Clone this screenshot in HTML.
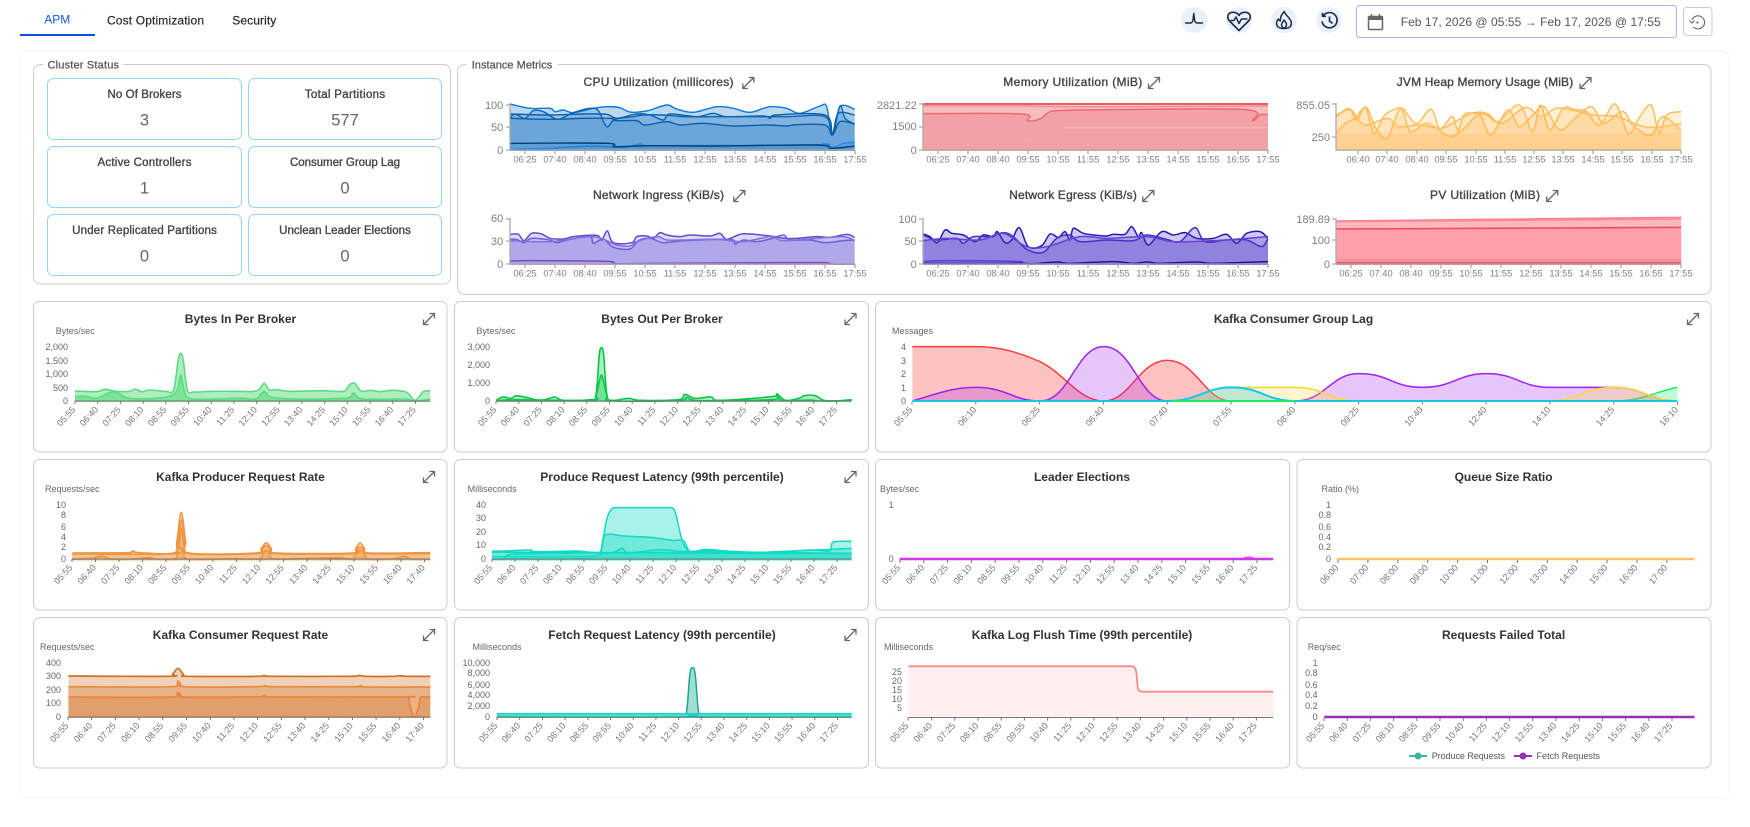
<!DOCTYPE html>
<html lang="en"><head><meta charset="utf-8"><title>APM</title>
<style>
html,body{margin:0;padding:0;background:#fff;width:1750px;height:827px;overflow:hidden}
.main{position:absolute;left:21px;top:52px;width:1707px;height:745px;background:#fff;border-radius:7px;box-shadow:0 0 6px rgba(0,0,0,.07)}
svg{position:absolute;left:0;top:0}
text{font-family:"Liberation Sans",sans-serif}
path{vector-effect:non-scaling-stroke;stroke-linejoin:round}
.card{fill:#fff;stroke:#ccc;stroke-width:1}
.stat{fill:#fff;stroke:#92d6f7;stroke-width:1}
.sl{font-size:11.5px;fill:#444;stroke:#444;stroke-width:.35;text-anchor:middle}
.sv{font-size:16.5px;fill:#666;text-anchor:middle}
.lg{font-size:11px;fill:#555;stroke:#555;stroke-width:.25}
.it{font-size:12px;fill:#444;stroke:#444;stroke-width:.35;text-anchor:middle}
.iy{font-size:11px;fill:#808080;text-anchor:end}
.ix{font-size:9.3px;fill:#808080;text-anchor:middle}
.ct{font-size:12px;font-weight:bold;fill:#333;text-anchor:middle}
.un{font-size:9px;fill:#666}
.cy{font-size:9px;fill:#666;text-anchor:end}
.cx text{font-size:9px;fill:#777;text-anchor:end}
.ex{fill:none;stroke:#666;stroke-width:1.3}
.ia{fill:none;stroke:#aaa;stroke-width:1.3}
.ca{fill:none;stroke:#777;stroke-width:1}
</style></head>
<body>
<div class="main"></div>
<svg width="1750" height="827" viewBox="0 0 1750 827" xmlns="http://www.w3.org/2000/svg">
<defs>
<clipPath id="c1"><rect x="180" y="130" width="1034" height="173"/></clipPath>
<clipPath id="c2"><rect x="180" y="480" width="1034" height="165"/></clipPath>
<clipPath id="c3"><rect x="130" y="130" width="1034" height="173"/></clipPath>
<clipPath id="c4"><rect x="130" y="480" width="1034" height="165"/></clipPath>
<clipPath id="c5"><rect x="487" y="290" width="901" height="163"/></clipPath>
<clipPath id="c6"><rect x="487" y="630" width="901" height="165"/></clipPath>
<clipPath id="c7"><rect x="100" y="100" width="648" height="221"/></clipPath>
<clipPath id="c8"><rect x="868" y="100" width="648" height="221"/></clipPath>
<clipPath id="c9"><rect x="77" y="100" width="1395" height="221"/></clipPath>
<clipPath id="c10"><rect x="95" y="100" width="653" height="216"/></clipPath>
<clipPath id="c11"><rect x="860" y="100" width="656" height="216"/></clipPath>
<clipPath id="c12"><rect x="88" y="100" width="660" height="209"/></clipPath>
<clipPath id="c13"><rect x="869" y="100" width="647" height="209"/></clipPath>
<clipPath id="c14"><rect x="70" y="600" width="665" height="190"/></clipPath>
</defs>

<!-- top bar -->
<text x="44.3" y="23.5" font-size="12" fill="#1a56db" textLength="26">APM</text>
<rect x="20" y="34" width="75" height="2" fill="#0b4fdc"/>
<text x="107" y="24.5" font-size="12" fill="#222" stroke="#222" stroke-width=".15" textLength="97">Cost Optimization</text>
<text x="232.3" y="24.5" font-size="12" fill="#222" stroke="#222" stroke-width=".15" textLength="44">Security</text>

<circle cx="1194" cy="20" r="13" fill="#eaf1fd"/>
<circle cx="1239" cy="20" r="13" fill="#eaf1fd"/>
<circle cx="1284" cy="20" r="13" fill="#eaf1fd"/>
<circle cx="1329" cy="20" r="13" fill="#eaf1fd"/>
<g fill="none" stroke="#1e2d4a" stroke-width="1.5">
<path d="M1185 23h5.5c1.500 0 2-1 2.500-3l.8-6.500 .8 6.500c.4 2 1 3 2.500 3h6"/>
<path stroke-width="1.7" d="M1239 30.500L1229.500 21C1226 17 1228 12.300 1233 12.300C1236 12.300 1238 13.500 1239 15.500C1240 13.500 1242 12.300 1245 12.300C1250 12.300 1252 17 1248.500 21Z"/>
<path d="M1230.500 20.500h3.500l2-3.500 3 6.500 2.500-4.500h6"/>
<path d="M1284.500 11.500c.5 3 3 4.500 4.500 6.500 2 2.500 3.200 5.500 1.700 8-1 1.700-3 2.500-6.700 2.500s-5.700-.8-6.700-2.500c-1.500-2.500-.5-5.500 1-7 .5 1 1 1.700 2 2 0-3 1.200-7 4.200-9.500z"/>
<path d="M1284 20c1 1.500 2.500 2.500 2.500 4.500 0 1.500-1 3.500-2.500 3.500s-2.500-2-2.500-3.500c0-1 .5-1.500 1-2 .5-.5 1-1.500 1.500-2.500z"/>
<path stroke-width="1.7" d="M1323.500 15.500A7.600 7.600 0 1 1 1322 21.500"/>
<path stroke-width="1.7" d="M1322.500 12.800v3.500h3.500M1329.500 16.500v4.500l3 2.500"/>
</g>

<rect x="1356.5" y="5.5" width="320" height="32" rx="3" fill="#fff" stroke="#a8b4e4"/>
<rect x="1368.5" y="16.5" width="14" height="13" rx="1" fill="#fff" stroke="#666" stroke-width="1.5"/>
<rect x="1368.5" y="16" width="14" height="4" fill="#666"/>
<path d="M1371.5 14v3M1379.5 14v3" stroke="#666" stroke-width="1.5"/>
<text x="1400.7" y="26" font-size="12" fill="#555" textLength="260">Feb 17, 2026 @ 05:55 → Feb 17, 2026 @ 17:55</text>
<rect x="1683.5" y="7.5" width="28.5" height="28" rx="3" fill="#fff" stroke="#ccc"/>
<g fill="none" stroke="#666" stroke-width="1.1">
<path d="M1692 20A6.500 6.500 0 1 1 1693.500 27"/>
<path d="M1689.500 20.500l2.500 2.500 2.500-2.500"/>
</g>
<circle cx="1697.5" cy="22.5" r="1.1" fill="#666"/>

<!-- Cluster Status -->
<rect class="card" x="33.5" y="64.5" width="417" height="219.5" rx="7"/>
<rect x="43.3" y="60" width="79.7" height="8" fill="#fff"/>
<text class="lg" x="47.5" y="68.5" textLength="71.5">Cluster Status</text>
<rect class="stat" x="47.5" y="78.5" width="194" height="61" rx="6"/>
<rect class="stat" x="248.5" y="78.5" width="193" height="61" rx="6"/>
<rect class="stat" x="47.5" y="146.5" width="194" height="61" rx="6"/>
<rect class="stat" x="248.5" y="146.5" width="193" height="61" rx="6"/>
<rect class="stat" x="47.5" y="214.5" width="194" height="61" rx="6"/>
<rect class="stat" x="248.5" y="214.5" width="193" height="61" rx="6"/>
<text class="sl" x="144.5" y="98" textLength="74">No Of Brokers</text>
<text class="sv" x="144.5" y="125.5">3</text>
<text class="sl" x="345" y="98" textLength="80.3">Total Partitions</text>
<text class="sv" x="345" y="125.5">577</text>
<text class="sl" x="144.5" y="166" textLength="94">Active Controllers</text>
<text class="sv" x="144.5" y="193.5">1</text>
<text class="sl" x="345" y="166" textLength="110">Consumer Group Lag</text>
<text class="sv" x="345" y="193.5">0</text>
<text class="sl" x="144.5" y="234" textLength="144.7">Under Replicated Partitions</text>
<text class="sv" x="144.5" y="261.5">0</text>
<text class="sl" x="345" y="234" textLength="131.7">Unclean Leader Elections</text>
<text class="sv" x="345" y="261.5">0</text>

<!-- Instance Metrics -->
<rect class="card" x="457.5" y="64.5" width="1253.5" height="230" rx="7"/>
<rect x="466.7" y="60" width="90.6" height="8" fill="#fff"/>
<text class="lg" x="471.7" y="68.5" textLength="80.6">Instance Metrics</text>

<text class="it" x="658.5" y="86" textLength="150">CPU Utilization (millicores)</text>
<text class="it" x="658.5" y="199" textLength="131">Network Ingress (KiB/s)</text>
<text class="it" x="1072.8" y="86" textLength="139">Memory Utilization (MiB)</text>
<text class="it" x="1073" y="199" textLength="127.7">Network Egress (KiB/s)</text>
<text class="it" x="1485" y="86" textLength="176.4">JVM Heap Memory Usage (MiB)</text>
<text class="it" x="1485" y="199" textLength="110">PV Utilization (MiB)</text>
<path class="ex" transform="translate(748.3 83)" d="M-5.500 5.500L5.500-5.500M.5-5.500h5v5M-5.500.5v5h5"/>
<path class="ex" transform="translate(739.3 196)" d="M-5.500 5.500L5.500-5.500M.5-5.500h5v5M-5.500.5v5h5"/>
<path class="ex" transform="translate(1154 83)" d="M-5.500 5.500L5.500-5.500M.5-5.500h5v5M-5.500.5v5h5"/>
<path class="ex" transform="translate(1148.3 196)" d="M-5.500 5.500L5.500-5.500M.5-5.500h5v5M-5.500.5v5h5"/>
<path class="ex" transform="translate(1585.5 83)" d="M-5.500 5.500L5.500-5.500M.5-5.500h5v5M-5.500.5v5h5"/>
<path class="ex" transform="translate(1552.2 196)" d="M-5.500 5.500L5.500-5.500M.5-5.500h5v5M-5.500.5v5h5"/>

<!-- CPU -->
<g transform="translate(450 50) scale(.33333)" clip-path="url(#c1)" fill-opacity=".18" stroke-width="1.4" fill="#0a6cc4">
<path class="sm" fill-opacity=".27" stroke="#0a78d8" d="M180 162 240 175 300 175 315 185 340 180 370 188 430 175 470 170 510 173 540 186 590 183 650 165 680 177 730 187 800 170 850 175 900 187 960 170 1010 175 1050 190 1110 168 1130 170 1147 255 1170 170 1214 178h30V330H180"/>
<path class="sm" stroke="#0b5fa8" d="M180 192 300 195 400 192 470 193 500 205 560 192 600 195 640 210 660 192 740 200 790 190 830 200 940 198 960 205 980 195 1125 195 1147 250 1165 190 1214 195h30V330H180"/>
<path class="sm" stroke="#0767b8" d="M180 205 195 192 225 205 250 182 280 185 320 208 345 200 370 188 420 175 445 182 470 230 495 208 550 200 580 195 640 195 700 200 800 200 1000 200 1125 200 1147 255 1170 168 1185 205 1214 222h30V330H180"/>
<path class="sm" stroke="#0a5ea8" d="M180 205 300 208 400 205 480 205 500 212 560 212 585 225 650 215 690 225 760 220 850 228 950 225 1010 228 1040 224 1125 225 1147 255 1170 215 1214 222h30V330H180"/>
<path class="sm" fill-opacity=".12" stroke="#1a8ae8" d="M180 298 300 295 420 288 520 292 570 282 620 287 1100 285 1120 282 1150 292 1180 280 1214 277h30V330H180"/>
<path class="sm" fill-opacity=".12" stroke="#063e78" d="M180 285 195 280 470 280 495 290 600 287 800 288 1100 285 1145 295 1214 288h30V330H180"/>
</g>
<!-- Ingress -->
<g transform="translate(450 50) scale(.33333)" clip-path="url(#c2)" fill-opacity=".22" stroke-width="1.5" fill="#6a5ad8">
<path class="sm" stroke="#5b4fcf" d="M180 553 205 553 222 572 245 550 275 552 300 565 340 567 370 560 440 556 455 570 472 543 490 578 545 578 560 560 590 558 610 565 630 548 650 555 690 560 720 555 780 558 810 550 830 568 870 553 900 552 960 558 1020 566 1100 560 1140 562 1190 553 1214 562h30V670H180"/>
<path class="sm" stroke="#7a5cd6" d="M180 568 200 568 222 578 245 565 300 570 320 578 360 568 420 560 430 580 460 567 490 592 540 597 565 572 600 565 640 578 700 572 840 568 855 582 880 570 920 575 960 567 1000 555 1020 570 1080 570 1125 578 1180 572 1214 570h30V670H180"/>
<path class="sm" stroke="#8a6be0" d="M180 572 300 575 420 560 470 572 500 585 540 588 560 575 620 560 650 570 700 570 800 568 880 575 960 560 1000 572 1100 565 1180 560 1214 572h30V670H180"/>
<path class="sm" stroke="#8544d0" fill-opacity=".08" d="M180 634 230 632 470 634 495 641 600 640 800 639 1000 638 1120 638 1150 642 1214 642h30V670H180"/>
</g>
<!-- Memory -->
<g transform="translate(880 50) scale(.33333)" clip-path="url(#c3)" fill-opacity=".2" stroke-width="1.5" fill="#e84a52">
<path stroke="#ef5a62" stroke-width="2" d="M130 162H1164h30V330H130"/>
<path class="sm" stroke="#f28b8e" d="M130 168 430 168 600 170 1164 168h30V330H130"/>
<path class="sm" stroke="#ea6a72" fill-opacity=".24" d="M130 191 425 192 442 212 480 207 510 185 560 181 700 179 1098 179 1118 212 1140 194 1164 194h30V330H130"/>
<path class="sm" stroke="#f6a2a6" fill="none" d="M130 268 420 265 440 272 500 263 550 235"/>
<path stroke="#f6b4b5" fill="none" d="M550 233H1164"/>
</g>
<!-- Egress -->
<g transform="translate(880 50) scale(.33333)" clip-path="url(#c4)" fill-opacity=".27" stroke-width="1.5" fill="#4a34c8">
<path class="sm" stroke="#2219b0" d="M130 552 150 560 172 578 195 540 215 550 250 555 285 575 310 555 340 560 352 545 375 578 395 570 418 533 445 590 485 587 510 552 535 562 555 545 570 570 580 535 610 550 650 556 680 558 700 553 735 553 755 530 775 560 785 548 805 585 845 545 880 555 915 548 950 565 1000 565 1040 553 1070 580 1100 550 1140 545 1164 565h30V670H130"/>
<path class="sm" stroke="#4a2ec8" d="M130 555 170 570 230 565 250 580 280 560 330 560 370 548 400 560 440 598 490 607 530 565 570 555 600 575 680 570 760 572 800 555 860 568 900 575 945 533 975 575 1040 570 1100 570 1145 590 1164 565h30V670H130"/>
<path class="sm" stroke="#6a3ed8" d="M130 572 200 565 300 570 370 550 440 590 500 590 600 560 680 565 800 560 880 575 1000 572 1100 565 1164 560h30V670H130"/>
<path class="sm" stroke="#6a30e0" fill-opacity=".08" d="M130 635 200 632 420 635 450 641 1164 642h30V670H130"/>
<path class="sm" stroke="#1b13a8" fill="none" d="M130 640 300 640 430 640 450 642 530 636 570 640 700 635 760 640 800 636 840 640 950 636 1000 640 1164 635"/>
</g>
<!-- JVM -->
<g transform="translate(1150 0) scale(.3827 .33333)" clip-path="url(#c5)" fill-opacity=".2" stroke-width="1.5" fill="#ffb347" stroke="#ffbe5c">
<path class="sm" d="M487 350 520 325 540 360 563 322 585 400 610 350 635 330 660 325 680 355 700 370 735 328 760 395 800 405 820 345 850 340 880 345 910 365 965 315 1000 395 1020 315 1045 390 1080 325 1110 328 1140 335 1175 375 1215 312 1250 400 1280 350 1310 315 1330 400 1350 345 1388 335h30V480H487"/>
<path class="sm" d="M487 400 510 370 535 355 565 322 590 385 620 415 655 325 680 395 720 370 760 385 790 350 810 395 860 345 890 405 935 330 965 380 1000 345 1030 320 1070 390 1115 350 1155 320 1185 370 1235 335 1265 380 1310 405 1340 350 1388 392h30V480H487"/>
<path class="sm" d="M487 345 525 330 560 375 620 355 650 380 700 375 760 385 790 370 840 340 880 340 920 370 980 322 1020 350 1060 325 1100 330 1160 345 1220 350 1290 380 1340 380 1388 370h30V480H487"/>
<path fill-opacity=".22" stroke="none" d="M487 400H1388V450H487"/>
</g>
<!-- PV -->
<g transform="translate(1150 0) scale(.3827 .33333)" clip-path="url(#c6)" fill-opacity=".25" stroke-width="1.5" fill="#ff5a6e">
<path stroke="#ff7a88" d="M487 663L1388 652h30V820H487"/>
<path stroke="#ff8a96" d="M487 665L1388 657h30V820H487"/>
<path stroke="#f0485e" d="M487 687L1388 682h30V820H487"/>
<path stroke="#ff8a96" fill-opacity=".1" d="M487 780H1388h30V820H487"/>
<path stroke="#ff4560" stroke-width="2.5" fill="none" d="M487 790H1388"/>
</g>

<!-- instance axes -->
<path class="ia" d="M510 103V150H855M506 105h4M506 127h4M506 150h4M525 150v4M555 150v4M585 150v4M615 150v4M645 150v4M675 150v4M705 150v4M735 150v4M765 150v4M795 150v4M825 150v4M855 150v4"/>
<path class="ia" d="M510 218V264H855M506 219h4M506 241h4M506 264h4M525 264v4M555 264v4M585 264v4M615 264v4M645 264v4M675 264v4M705 264v4M735 264v4M765 264v4M795 264v4M825 264v4M855 264v4"/>
<path class="ia" d="M923 103V150H1268M919 104h4M919 127h4M919 150h4M938 150v4M968 150v4M998 150v4M1028 150v4M1058 150v4M1088 150v4M1118 150v4M1148 150v4M1178 150v4M1208 150v4M1238 150v4M1268 150v4"/>
<path class="ia" d="M923 218V264H1268M919 219h4M919 241h4M919 264h4M938 264v4M968 264v4M998 264v4M1028 264v4M1058 264v4M1088 264v4M1118 264v4M1148 264v4M1178 264v4M1208 264v4M1238 264v4M1268 264v4"/>
<path class="ia" d="M1336 103V150H1681M1332 104h4M1332 137h4M1358 150v4M1387 150v4M1417 150v4M1446 150v4M1476 150v4M1505 150v4M1534 150v4M1563 150v4M1593 150v4M1622 150v4M1652 150v4M1681 150v4"/>
<path class="ia" d="M1336 218V264H1681M1332 219h4M1332 240h4M1332 264h4M1351 264v4M1381 264v4M1411 264v4M1441 264v4M1471 264v4M1501 264v4M1531 264v4M1561 264v4M1591 264v4M1621 264v4M1651 264v4M1681 264v4"/>

<text class="iy" x="503.3" y="109">100</text><text class="iy" x="503.3" y="131">50</text><text class="iy" x="503.3" y="154">0</text>
<text class="iy" x="503.3" y="222">60</text><text class="iy" x="503.3" y="245">30</text><text class="iy" x="503.3" y="268">0</text>
<text class="iy" x="916.7" y="109">2821.22</text><text class="iy" x="916.7" y="130">1500</text><text class="iy" x="916.7" y="154">0</text>
<text class="iy" x="916.7" y="223">100</text><text class="iy" x="916.7" y="245">50</text><text class="iy" x="916.7" y="268">0</text>
<text class="iy" x="1330" y="109">855.05</text><text class="iy" x="1330" y="141">250</text>
<text class="iy" x="1330" y="223">189.89</text><text class="iy" x="1330" y="244">100</text><text class="iy" x="1330" y="268">0</text>

<g>
<text class="ix" x="525" y="162.5">06:25</text><text class="ix" x="555" y="162.5">07:40</text><text class="ix" x="585" y="162.5">08:40</text><text class="ix" x="615" y="162.5">09:55</text><text class="ix" x="645" y="162.5">10:55</text><text class="ix" x="675" y="162.5">11:55</text><text class="ix" x="705" y="162.5">12:55</text><text class="ix" x="735" y="162.5">13:55</text><text class="ix" x="765" y="162.5">14:55</text><text class="ix" x="795" y="162.5">15:55</text><text class="ix" x="825" y="162.5">16:55</text><text class="ix" x="855" y="162.5">17:55</text>
<text class="ix" x="525" y="276.5">06:25</text><text class="ix" x="555" y="276.5">07:40</text><text class="ix" x="585" y="276.5">08:40</text><text class="ix" x="615" y="276.5">09:55</text><text class="ix" x="645" y="276.5">10:55</text><text class="ix" x="675" y="276.5">11:55</text><text class="ix" x="705" y="276.5">12:55</text><text class="ix" x="735" y="276.5">13:55</text><text class="ix" x="765" y="276.5">14:55</text><text class="ix" x="795" y="276.5">15:55</text><text class="ix" x="825" y="276.5">16:55</text><text class="ix" x="855" y="276.5">17:55</text>
<text class="ix" x="938" y="162.5">06:25</text><text class="ix" x="968" y="162.5">07:40</text><text class="ix" x="998" y="162.5">08:40</text><text class="ix" x="1028" y="162.5">09:55</text><text class="ix" x="1058" y="162.5">10:55</text><text class="ix" x="1088" y="162.5">11:55</text><text class="ix" x="1118" y="162.5">12:55</text><text class="ix" x="1148" y="162.5">13:55</text><text class="ix" x="1178" y="162.5">14:55</text><text class="ix" x="1208" y="162.5">15:55</text><text class="ix" x="1238" y="162.5">16:55</text><text class="ix" x="1268" y="162.5">17:55</text>
<text class="ix" x="938" y="276.5">06:25</text><text class="ix" x="968" y="276.5">07:40</text><text class="ix" x="998" y="276.5">08:40</text><text class="ix" x="1028" y="276.5">09:55</text><text class="ix" x="1058" y="276.5">10:55</text><text class="ix" x="1088" y="276.5">11:55</text><text class="ix" x="1118" y="276.5">12:55</text><text class="ix" x="1148" y="276.5">13:55</text><text class="ix" x="1178" y="276.5">14:55</text><text class="ix" x="1208" y="276.5">15:55</text><text class="ix" x="1238" y="276.5">16:55</text><text class="ix" x="1268" y="276.5">17:55</text>
<text class="ix" x="1358" y="162.5">06:40</text><text class="ix" x="1387" y="162.5">07:40</text><text class="ix" x="1417" y="162.5">08:40</text><text class="ix" x="1446" y="162.5">09:55</text><text class="ix" x="1476" y="162.5">10:55</text><text class="ix" x="1505" y="162.5">11:55</text><text class="ix" x="1534" y="162.5">12:55</text><text class="ix" x="1563" y="162.5">13:55</text><text class="ix" x="1593" y="162.5">14:55</text><text class="ix" x="1622" y="162.5">15:55</text><text class="ix" x="1652" y="162.5">16:55</text><text class="ix" x="1681" y="162.5">17:55</text>
<text class="ix" x="1351" y="276.5">06:25</text><text class="ix" x="1381" y="276.5">07:40</text><text class="ix" x="1411" y="276.5">08:40</text><text class="ix" x="1441" y="276.5">09:55</text><text class="ix" x="1471" y="276.5">10:55</text><text class="ix" x="1501" y="276.5">11:55</text><text class="ix" x="1531" y="276.5">12:55</text><text class="ix" x="1561" y="276.5">13:55</text><text class="ix" x="1591" y="276.5">14:55</text><text class="ix" x="1621" y="276.5">15:55</text><text class="ix" x="1651" y="276.5">16:55</text><text class="ix" x="1681" y="276.5">17:55</text>
</g>

<!-- lower cards -->
<rect class="card" x="33.5" y="301.5" width="413.5" height="150.5" rx="6"/>
<rect class="card" x="454.5" y="301.5" width="414" height="150.5" rx="6"/>
<rect class="card" x="875.5" y="301.5" width="835.5" height="150.5" rx="6"/>
<rect class="card" x="33.5" y="459.5" width="413.5" height="150.5" rx="6"/>
<rect class="card" x="454.5" y="459.5" width="414" height="150.5" rx="6"/>
<rect class="card" x="875.5" y="459.5" width="414" height="150.5" rx="6"/>
<rect class="card" x="1297" y="459.5" width="414" height="150.5" rx="6"/>
<rect class="card" x="33.5" y="617.5" width="413.5" height="150.5" rx="6"/>
<rect class="card" x="454.5" y="617.5" width="414" height="150.5" rx="6"/>
<rect class="card" x="875.5" y="617.5" width="414" height="150.5" rx="6"/>
<rect class="card" x="1297" y="617.5" width="414" height="150.5" rx="6"/>

<text class="ct" x="240.5" y="323">Bytes In Per Broker</text>
<text class="ct" x="662" y="323">Bytes Out Per Broker</text>
<text class="ct" x="1293.5" y="323">Kafka Consumer Group Lag</text>
<text class="ct" x="240.5" y="481">Kafka Producer Request Rate</text>
<text class="ct" x="662" y="481">Produce Request Latency (99th percentile)</text>
<text class="ct" x="1082" y="481">Leader Elections</text>
<text class="ct" x="1503.6" y="481">Queue Size Ratio</text>
<text class="ct" x="240.5" y="639">Kafka Consumer Request Rate</text>
<text class="ct" x="662" y="639">Fetch Request Latency (99th percentile)</text>
<text class="ct" x="1082" y="639">Kafka Log Flush Time (99th percentile)</text>
<text class="ct" x="1503.6" y="639">Requests Failed Total</text>

<path class="ex" transform="translate(429 319)" d="M-5.500 5.500L5.500-5.500M.5-5.500h5v5M-5.500.5v5h5"/>
<path class="ex" transform="translate(850.5 319)" d="M-5.500 5.500L5.500-5.500M.5-5.500h5v5M-5.500.5v5h5"/>
<path class="ex" transform="translate(1693 319)" d="M-5.500 5.500L5.500-5.500M.5-5.500h5v5M-5.500.5v5h5"/>
<path class="ex" transform="translate(429 477)" d="M-5.500 5.500L5.500-5.500M.5-5.500h5v5M-5.500.5v5h5"/>
<path class="ex" transform="translate(850.5 477)" d="M-5.500 5.500L5.500-5.500M.5-5.500h5v5M-5.500.5v5h5"/>
<path class="ex" transform="translate(429 635)" d="M-5.500 5.500L5.500-5.500M.5-5.500h5v5M-5.500.5v5h5"/>
<path class="ex" transform="translate(850.5 635)" d="M-5.500 5.500L5.500-5.500M.5-5.500h5v5M-5.500.5v5h5"/>

<text class="un" x="55.7" y="334">Bytes/sec</text>
<text class="un" x="476.4" y="334">Bytes/sec</text>
<text class="un" x="892" y="334">Messages</text>
<text class="un" x="45" y="492">Requests/sec</text>
<text class="un" x="467.6" y="492">Milliseconds</text>
<text class="un" x="880" y="492">Bytes/sec</text>
<text class="un" x="1321.5" y="492">Ratio (%)</text>
<text class="un" x="40" y="650">Requests/sec</text>
<text class="un" x="472.5" y="650">Milliseconds</text>
<text class="un" x="884" y="650">Milliseconds</text>
<text class="un" x="1307.7" y="650">Req/sec</text>

<!-- Bytes In -->
<g transform="translate(20 295) scale(.54855 .33333)" clip-path="url(#c7)" fill-opacity=".42" stroke-width="1.6" fill="#3fd467" stroke="#5bdc7e">
<path class="sm" d="M100 288 140 290 155 283 175 289 200 289 210 282 222 290 236 285 265 289 280 285 288 200 293 175 298 200 305 285 318 291 350 289 400 289 420 290 435 285 445 265 455 285 470 284 490 289 550 287 590 289 600 270 610 265 622 288 640 286 655 290 680 286 705 292 720 316 735 290 748 288h30V350H100"/>
<path class="sm" d="M100 305 120 304 140 310 170 290 200 310 260 308 285 290 293 240 300 290 315 312 400 310 430 312 445 290 470 310 590 310 608 295 625 312 700 312 720 318 748 312h30V350H100"/>
</g>
<!-- Bytes Out -->
<g transform="translate(20 295) scale(.54855 .33333)" clip-path="url(#c8)" fill-opacity=".35" stroke-width="1.6" fill="#12c94f" stroke="#0dc44a">
<path class="sm" d="M868 316 880 306 895 310 905 302 925 308 950 316 975 306 990 316 1040 314 1050 300 1056 180 1060 158 1064 180 1070 300 1080 316 1110 310 1130 316 1200 314 1212 298 1230 310 1260 306 1275 316 1370 305 1380 297 1395 316 1420 310 1430 302 1450 302 1465 316 1490 318 1516 314h30V350H868"/>
<path class="sm" d="M868 318 900 314 1040 316 1050 300 1056 260 1060 240 1064 260 1070 300 1080 318 1200 316 1215 307 1240 317 1370 314 1380 304 1392 317 1440 315 1460 318 1516 316h30V350H868"/>
</g>
<!-- Lag -->
<g transform="translate(870 295) scale(.54855 .33333)" clip-path="url(#c9)" stroke-width="1.5">
<path fill="#ff0000" fill-opacity=".24" stroke="#ff3d3d" d="M77 155L193 155C240 155 275 175 310 200C355 235 380 318 426 318C475 318 490 196 542 196C595 196 610 318 658 318H1472h30V348H77"/>
<path fill="#00ff64" fill-opacity=".25" stroke="#18ee60" d="M77 318H1356C1410 318 1430 290 1472 277h30V348H77"/>
<path fill="#a020f0" fill-opacity=".25" stroke="#a020f0" d="M77 318C125 295 150 277 193 277C250 277 260 318 310 318C365 318 375 155 426 155C480 155 490 318 542 318H775C830 318 840 236 890 236C950 236 950 277 1007 277C1065 277 1070 236 1124 236C1180 236 1185 277 1240 277H1356C1410 277 1420 318 1472 318h30V348H77"/>
<path fill="#ffd633" fill-opacity=".25" stroke="#ffd633" d="M77 318H542C600 318 610 277 658 277H775C830 277 835 318 890 318H1240C1290 318 1300 277 1356 277C1410 277 1420 318 1472 318h30V348H77"/>
<path fill="#00c8e6" fill-opacity=".25" stroke="#13c8e8" stroke-width="2" d="M77 318H542C600 318 610 277 658 277C715 277 720 318 775 318H1472h30V348H77"/>
</g>
<path fill="none" stroke="#18ee60" stroke-width="2" d="M1172 401H1295"/>
<!-- Producer -->
<g transform="translate(20 455) scale(.54855 .33333)" clip-path="url(#c10)" fill-opacity=".33" stroke-width="1.6" fill="#ee8e33" stroke="#f0953f">
<path class="sm" d="M95 294 195 293 205 288 218 293 280 294 286 260 294 172 302 260 308 294 430 294 440 280 449 263 458 280 468 294 605 294 612 280 620 264 628 280 636 294 748 293h30V340H95"/>
<path class="sm" d="M95 296 280 296 287 265 294 195 301 265 308 296 430 296 440 285 449 272 458 285 468 296 605 296 612 286 620 276 628 286 636 296 748 296h30V340H95"/>
<path class="sm" d="M95 313 130 310 150 303 165 312 200 313 235 308 250 313 282 313 288 280 294 220 300 280 306 313 380 311 435 312 442 298 449 285 456 298 463 312 530 310 580 308 605 313 612 298 620 285 628 298 636 313 680 312 700 304 715 313 748 313h30V340H95"/>
</g>
<!-- Produce latency -->
<g transform="translate(20 455) scale(.54855 .33333)" clip-path="url(#c11)" fill-opacity=".38" stroke-width="1.5" fill="#19dcc6" stroke="#0fd9c3">
<path d="M860 305H1040L1058 300C1066 250 1066 158 1085 158H1188C1200 158 1200 270 1220 290L1240 290L1516 295h30V340H860"/>
<path class="sm" d="M860 288 880 288 930 285 940 290 1015 288 1040 292 1058 290 1067 240 1100 243 1150 247 1190 256 1210 258 1222 290 1250 283 1300 290 1360 295 1440 285 1475 288 1480 265 1490 259 1516 259h30V340H860"/>
<path class="sm" d="M860 292 1040 292 1065 295 1085 290 1098 280 1110 293 1160 285 1180 285 1210 290 1260 287 1340 292 1380 290 1516 280h30V340H860"/>
<path class="sm" d="M860 313 880 312 900 297 1000 295 1050 293 1500 295 1516 295h30V340H860"/>
</g>
<!-- Consumer -->
<g transform="translate(20 615) scale(.54855 .33333)" clip-path="url(#c12)" fill-opacity=".35" stroke-width="1.7" fill="#d87a30">
<path class="sm" stroke="#c8722c" d="M88 183 270 184 278 178 288 160 298 178 306 184 430 184 445 181 460 184 600 184 618 181 630 184 680 184 690 182 705 184 748 184h30V340H88"/>
<path class="sm" stroke="#e88a3e" d="M88 215 275 215 288 198 300 215 430 215 447 212 465 215 610 215 620 212 635 216 748 216h30V340H88"/>
<path class="sm" stroke="#e8843c" d="M88 246 275 246 288 232 300 246 435 245 448 242 462 246 700 246 708 248 712 280 719 306 726 280 730 248 736 246 748 246h30V340H88"/>
</g>
<!-- Fetch -->
<g transform="translate(20 615) scale(.54855 .33333)" clip-path="url(#c13)" stroke-width="1.5">
<path class="sm" fill="#1aa894" fill-opacity=".4" stroke="#1aa894" d="M869 306 1205 306 1215 290 1221 180 1226 158 1231 180 1237 290 1245 306 1516 306h30V340H869"/>
<path fill="#1ad6c0" fill-opacity=".75" stroke="#18d6bf" d="M869 296H1516h30V340H869"/>
</g>
<!-- Leader, Queue, Failed -->
<g transform="translate(870 455) scale(.54855 .33333)" fill="none">
<path stroke="#d633f0" stroke-width="2.6" d="M54 312H735"/>
<path stroke="#d633f0" stroke-width="1" d="M678 312Q690 300 702 312"/>
<path stroke="#ffc266" stroke-width="2.6" d="M851 312H1503"/>
<path stroke="#9b2fb8" stroke-width="2.6" d="M828 786H1503"/>
</g>
<!-- Log flush -->
<g transform="translate(870 455) scale(.54855 .33333)" clip-path="url(#c14)">
<path fill="#fff0f0" stroke="#ff8888" stroke-width="1.8" d="M70 634H478C485 634 486 650 487 680C488 705 490 710 495 710H735h30V820H70"/>
</g>

<!-- lower axes -->
<path class="ca" d="M75 401H430M75 401v3M97.7 401v3M120.4 401v3M143.1 401v3M165.8 401v3M188.5 401v3M211.2 401v3M233.9 401v3M256.6 401v3M279.3 401v3M302 401v3M324.7 401v3M347.4 401v3M370.1 401v3M392.8 401v3M415.5 401v3"/>
<path class="ca" d="M496 401H851.6M496 401v3M518.7 401v3M541.4 401v3M564.1 401v3M586.8 401v3M609.5 401v3M632.2 401v3M654.9 401v3M677.6 401v3M700.3 401v3M723 401v3M745.7 401v3M768.4 401v3M791.1 401v3M813.8 401v3M836.5 401v3"/>
<path class="ca" d="M912 402v2.5M975.8 402v2.5M1039.6 402v2.5M1103.4 402v2.5M1167.2 402v2.5M1231 402v2.5M1294.8 402v2.5M1358.6 402v2.5M1422.4 402v2.5M1486.2 402v2.5M1550 402v2.5M1613.8 402v2.5M1677.5 402v2.5"/>
<path class="ca" d="M72 559H430M72 559v3M95.5 559v3M119 559v3M142.5 559v3M166 559v3M189.5 559v3M213 559v3M236.5 559v3M260 559v3M283.5 559v3M307 559v3M330.5 559v3M354 559v3M377.5 559v3M401 559v3M424.5 559v3"/>
<path class="ca" d="M492 559H851.6M492 559v3M515 559v3M538 559v3M561 559v3M584 559v3M607 559v3M630 559v3M653 559v3M676 559v3M699 559v3M722 559v3M745 559v3M768 559v3M791 559v3M814 559v3M837 559v3"/>
<path class="ca" d="M900 560v3M923.8 560v3M947.6 560v3M971.4 560v3M995.2 560v3M1019 560v3M1042.8 560v3M1066.6 560v3M1090.4 560v3M1114.2 560v3M1138 560v3M1161.8 560v3M1185.6 560v3M1209.4 560v3M1233.2 560v3M1257 560v3"/>
<path class="ca" d="M1338 560v3M1367.9 560v3M1397.8 560v3M1427.7 560v3M1457.6 560v3M1487.5 560v3M1517.4 560v3M1547.3 560v3M1577.2 560v3M1607.1 560v3M1637 560v3M1666.9 560v3"/>
<path class="ca" d="M68 717H430M68 717v3M91.7 717v3M115.4 717v3M139.1 717v3M162.8 717v3M186.5 717v3M210.2 717v3M233.9 717v3M257.6 717v3M281.3 717v3M305 717v3M328.7 717v3M352.4 717v3M376.1 717v3M399.8 717v3M423.5 717v3"/>
<path class="ca" d="M497 717H851.6M497 717v3M519.7 717v3M542.4 717v3M565.1 717v3M587.8 717v3M610.5 717v3M633.2 717v3M655.9 717v3M678.6 717v3M701.3 717v3M724 717v3M746.7 717v3M769.4 717v3M792.1 717v3M814.8 717v3M837.5 717v3"/>
<path class="ca" d="M908 717.5H1273M908 717.5v3M931.6 717.5v3M954.8 717.5v3M978 717.5v3M1001.2 717.5v3M1024.4 717.5v3M1047.6 717.5v3M1070.8 717.5v3M1094 717.5v3M1117.2 717.5v3M1140.4 717.5v3M1163.6 717.5v3M1186.8 717.5v3M1210 717.5v3M1233.2 717.5v3M1256.4 717.5v3"/>
<path class="ca" d="M1324 718v3M1347.2 718v3M1370.4 718v3M1393.6 718v3M1416.8 718v3M1440 718v3M1463.2 718v3M1486.4 718v3M1509.6 718v3M1532.8 718v3M1556 718v3M1579.2 718v3M1602.4 718v3M1625.6 718v3M1648.8 718v3M1672 718v3"/>

<!-- lower y labels -->
<text class="cy" x="68" y="350">2,000</text><text class="cy" x="68" y="364">1,500</text><text class="cy" x="68" y="377">1,000</text><text class="cy" x="68" y="391">500</text><text class="cy" x="68" y="404">0</text>
<text class="cy" x="490" y="350">3,000</text><text class="cy" x="490" y="368">2,000</text><text class="cy" x="490" y="386">1,000</text><text class="cy" x="490" y="404">0</text>
<text class="cy" x="906" y="350">4</text><text class="cy" x="906" y="364">3</text><text class="cy" x="906" y="377">2</text><text class="cy" x="906" y="391">1</text><text class="cy" x="906" y="404">0</text>
<text class="cy" x="66" y="508">10</text><text class="cy" x="66" y="518">8</text><text class="cy" x="66" y="530">6</text><text class="cy" x="66" y="540">4</text><text class="cy" x="66" y="550">2</text><text class="cy" x="66" y="562">0</text>
<text class="cy" x="486" y="508">40</text><text class="cy" x="486" y="521">30</text><text class="cy" x="486" y="535">20</text><text class="cy" x="486" y="548">10</text><text class="cy" x="486" y="562">0</text>
<text class="cy" x="893.6" y="508">1</text><text class="cy" x="893.6" y="562">0</text>
<text class="cy" x="1331" y="508">1</text><text class="cy" x="1331" y="518">0.8</text><text class="cy" x="1331" y="530">0.6</text><text class="cy" x="1331" y="540">0.4</text><text class="cy" x="1331" y="550">0.2</text><text class="cy" x="1331" y="562">0</text>
<text class="cy" x="61" y="666">400</text><text class="cy" x="61" y="679">300</text><text class="cy" x="61" y="693">200</text><text class="cy" x="61" y="706">100</text><text class="cy" x="61" y="720">0</text>
<text class="cy" x="490" y="666">10,000</text><text class="cy" x="490" y="676">8,000</text><text class="cy" x="490" y="688">6,000</text><text class="cy" x="490" y="698">4,000</text><text class="cy" x="490" y="709">2,000</text><text class="cy" x="490" y="720">0</text>
<text class="cy" x="902" y="675">25</text><text class="cy" x="902" y="684">20</text><text class="cy" x="902" y="693">15</text><text class="cy" x="902" y="702">10</text><text class="cy" x="902" y="711">5</text>
<text class="cy" x="1317.6" y="666">1</text><text class="cy" x="1317.6" y="676">0.8</text><text class="cy" x="1317.6" y="688">0.6</text><text class="cy" x="1317.6" y="698">0.4</text><text class="cy" x="1317.6" y="709">0.2</text><text class="cy" x="1317.6" y="720">0</text>

<!-- rotated x labels -->
<g class="cx" transform="translate(-2 2)">
<text transform="translate(78 408)rotate(-48)">05:55</text><text transform="translate(100.7 408)rotate(-48)">06:40</text><text transform="translate(123.4 408)rotate(-48)">07:25</text><text transform="translate(146.1 408)rotate(-48)">08:10</text><text transform="translate(168.8 408)rotate(-48)">08:55</text><text transform="translate(191.5 408)rotate(-48)">09:55</text><text transform="translate(214.2 408)rotate(-48)">10:40</text><text transform="translate(236.9 408)rotate(-48)">11:25</text><text transform="translate(259.6 408)rotate(-48)">12:10</text><text transform="translate(282.3 408)rotate(-48)">12:55</text><text transform="translate(305 408)rotate(-48)">13:40</text><text transform="translate(327.7 408)rotate(-48)">14:25</text><text transform="translate(350.4 408)rotate(-48)">15:10</text><text transform="translate(373.1 408)rotate(-48)">15:55</text><text transform="translate(395.8 408)rotate(-48)">16:40</text><text transform="translate(418.5 408)rotate(-48)">17:25</text>

<text transform="translate(499 408)rotate(-48)">05:55</text><text transform="translate(521.7 408)rotate(-48)">06:40</text><text transform="translate(544.4 408)rotate(-48)">07:25</text><text transform="translate(567.1 408)rotate(-48)">08:10</text><text transform="translate(589.8 408)rotate(-48)">08:55</text><text transform="translate(612.5 408)rotate(-48)">09:55</text><text transform="translate(635.2 408)rotate(-48)">10:40</text><text transform="translate(657.9 408)rotate(-48)">11:25</text><text transform="translate(680.6 408)rotate(-48)">12:10</text><text transform="translate(703.3 408)rotate(-48)">12:55</text><text transform="translate(726 408)rotate(-48)">13:40</text><text transform="translate(748.7 408)rotate(-48)">14:25</text><text transform="translate(771.4 408)rotate(-48)">15:10</text><text transform="translate(794.1 408)rotate(-48)">15:55</text><text transform="translate(816.8 408)rotate(-48)">16:40</text><text transform="translate(839.5 408)rotate(-48)">17:25</text>

<text transform="translate(915 408)rotate(-48)">05:55</text><text transform="translate(978.8 408)rotate(-48)">06:10</text><text transform="translate(1042.6 408)rotate(-48)">06:25</text><text transform="translate(1106.4 408)rotate(-48)">06:40</text><text transform="translate(1170.2 408)rotate(-48)">07:40</text><text transform="translate(1234 408)rotate(-48)">07:55</text><text transform="translate(1297.8 408)rotate(-48)">08:40</text><text transform="translate(1361.6 408)rotate(-48)">09:25</text><text transform="translate(1425.4 408)rotate(-48)">10:40</text><text transform="translate(1489.2 408)rotate(-48)">12:40</text><text transform="translate(1553 408)rotate(-48)">14:10</text><text transform="translate(1616.8 408)rotate(-48)">14:25</text><text transform="translate(1680.5 408)rotate(-48)">16:10</text>

<text transform="translate(75 566)rotate(-48)">05:55</text><text transform="translate(98.5 566)rotate(-48)">06:40</text><text transform="translate(122 566)rotate(-48)">07:25</text><text transform="translate(145.5 566)rotate(-48)">08:10</text><text transform="translate(169 566)rotate(-48)">08:55</text><text transform="translate(192.5 566)rotate(-48)">09:55</text><text transform="translate(216 566)rotate(-48)">10:40</text><text transform="translate(239.5 566)rotate(-48)">11:25</text><text transform="translate(263 566)rotate(-48)">12:10</text><text transform="translate(286.5 566)rotate(-48)">12:55</text><text transform="translate(310 566)rotate(-48)">13:40</text><text transform="translate(333.5 566)rotate(-48)">14:25</text><text transform="translate(357 566)rotate(-48)">15:10</text><text transform="translate(380.5 566)rotate(-48)">15:55</text><text transform="translate(404 566)rotate(-48)">16:40</text><text transform="translate(427.5 566)rotate(-48)">17:40</text>

<text transform="translate(495 566)rotate(-48)">05:55</text><text transform="translate(518 566)rotate(-48)">06:40</text><text transform="translate(541 566)rotate(-48)">07:25</text><text transform="translate(564 566)rotate(-48)">08:10</text><text transform="translate(587 566)rotate(-48)">08:55</text><text transform="translate(610 566)rotate(-48)">09:55</text><text transform="translate(633 566)rotate(-48)">10:40</text><text transform="translate(656 566)rotate(-48)">11:25</text><text transform="translate(679 566)rotate(-48)">12:10</text><text transform="translate(702 566)rotate(-48)">12:55</text><text transform="translate(725 566)rotate(-48)">13:40</text><text transform="translate(748 566)rotate(-48)">14:25</text><text transform="translate(771 566)rotate(-48)">15:10</text><text transform="translate(794 566)rotate(-48)">15:55</text><text transform="translate(817 566)rotate(-48)">16:40</text><text transform="translate(840 566)rotate(-48)">17:25</text>

<text transform="translate(903 566)rotate(-48)">05:55</text><text transform="translate(926.8 566)rotate(-48)">06:40</text><text transform="translate(950.6 566)rotate(-48)">07:25</text><text transform="translate(974.4 566)rotate(-48)">08:10</text><text transform="translate(998.2 566)rotate(-48)">08:55</text><text transform="translate(1022 566)rotate(-48)">09:55</text><text transform="translate(1045.8 566)rotate(-48)">10:40</text><text transform="translate(1069.6 566)rotate(-48)">11:25</text><text transform="translate(1093.4 566)rotate(-48)">12:10</text><text transform="translate(1117.2 566)rotate(-48)">12:55</text><text transform="translate(1141 566)rotate(-48)">13:40</text><text transform="translate(1164.8 566)rotate(-48)">14:25</text><text transform="translate(1188.6 566)rotate(-48)">15:10</text><text transform="translate(1212.4 566)rotate(-48)">15:55</text><text transform="translate(1236.2 566)rotate(-48)">16:40</text><text transform="translate(1260 566)rotate(-48)">17:25</text>

<text transform="translate(1341 566)rotate(-48)">06:00</text><text transform="translate(1370.9 566)rotate(-48)">07:00</text><text transform="translate(1400.8 566)rotate(-48)">08:00</text><text transform="translate(1430.7 566)rotate(-48)">09:00</text><text transform="translate(1460.6 566)rotate(-48)">10:00</text><text transform="translate(1490.5 566)rotate(-48)">11:00</text><text transform="translate(1520.4 566)rotate(-48)">12:00</text><text transform="translate(1550.3 566)rotate(-48)">13:00</text><text transform="translate(1580.2 566)rotate(-48)">14:00</text><text transform="translate(1610.1 566)rotate(-48)">15:00</text><text transform="translate(1640 566)rotate(-48)">16:00</text><text transform="translate(1669.9 566)rotate(-48)">17:00</text>

<text transform="translate(71 724)rotate(-48)">05:55</text><text transform="translate(94.7 724)rotate(-48)">06:40</text><text transform="translate(118.4 724)rotate(-48)">07:25</text><text transform="translate(142.1 724)rotate(-48)">08:10</text><text transform="translate(165.8 724)rotate(-48)">08:55</text><text transform="translate(189.5 724)rotate(-48)">09:55</text><text transform="translate(213.2 724)rotate(-48)">10:40</text><text transform="translate(236.9 724)rotate(-48)">11:25</text><text transform="translate(260.6 724)rotate(-48)">12:10</text><text transform="translate(284.3 724)rotate(-48)">12:55</text><text transform="translate(308 724)rotate(-48)">13:40</text><text transform="translate(331.7 724)rotate(-48)">14:25</text><text transform="translate(355.4 724)rotate(-48)">15:10</text><text transform="translate(379.1 724)rotate(-48)">15:55</text><text transform="translate(402.8 724)rotate(-48)">16:40</text><text transform="translate(426.5 724)rotate(-48)">17:40</text>

<text transform="translate(500 724)rotate(-48)">05:55</text><text transform="translate(522.7 724)rotate(-48)">06:40</text><text transform="translate(545.4 724)rotate(-48)">07:25</text><text transform="translate(568.1 724)rotate(-48)">08:10</text><text transform="translate(590.8 724)rotate(-48)">08:55</text><text transform="translate(613.5 724)rotate(-48)">09:55</text><text transform="translate(636.2 724)rotate(-48)">10:40</text><text transform="translate(658.9 724)rotate(-48)">11:25</text><text transform="translate(681.6 724)rotate(-48)">12:10</text><text transform="translate(704.3 724)rotate(-48)">12:55</text><text transform="translate(727 724)rotate(-48)">13:40</text><text transform="translate(749.7 724)rotate(-48)">14:25</text><text transform="translate(772.4 724)rotate(-48)">15:10</text><text transform="translate(795.1 724)rotate(-48)">15:55</text><text transform="translate(817.8 724)rotate(-48)">16:40</text><text transform="translate(840.5 724)rotate(-48)">17:25</text>

<text transform="translate(911 724)rotate(-48)">05:55</text><text transform="translate(934.6 724)rotate(-48)">06:40</text><text transform="translate(957.8 724)rotate(-48)">07:25</text><text transform="translate(981 724)rotate(-48)">08:10</text><text transform="translate(1004.2 724)rotate(-48)">08:55</text><text transform="translate(1027.4 724)rotate(-48)">09:55</text><text transform="translate(1050.6 724)rotate(-48)">10:40</text><text transform="translate(1073.8 724)rotate(-48)">11:25</text><text transform="translate(1097 724)rotate(-48)">12:10</text><text transform="translate(1120.2 724)rotate(-48)">12:55</text><text transform="translate(1143.4 724)rotate(-48)">13:40</text><text transform="translate(1166.6 724)rotate(-48)">14:25</text><text transform="translate(1189.8 724)rotate(-48)">15:10</text><text transform="translate(1213 724)rotate(-48)">15:55</text><text transform="translate(1236.2 724)rotate(-48)">16:40</text><text transform="translate(1259.4 724)rotate(-48)">17:25</text>

<text transform="translate(1327 724)rotate(-48)">05:55</text><text transform="translate(1350.2 724)rotate(-48)">06:40</text><text transform="translate(1373.4 724)rotate(-48)">07:25</text><text transform="translate(1396.6 724)rotate(-48)">08:10</text><text transform="translate(1419.8 724)rotate(-48)">08:55</text><text transform="translate(1443 724)rotate(-48)">09:55</text><text transform="translate(1466.2 724)rotate(-48)">10:40</text><text transform="translate(1489.4 724)rotate(-48)">11:25</text><text transform="translate(1512.6 724)rotate(-48)">12:10</text><text transform="translate(1535.8 724)rotate(-48)">12:55</text><text transform="translate(1559 724)rotate(-48)">13:40</text><text transform="translate(1582.2 724)rotate(-48)">14:25</text><text transform="translate(1605.4 724)rotate(-48)">15:10</text><text transform="translate(1628.6 724)rotate(-48)">15:55</text><text transform="translate(1651.8 724)rotate(-48)">16:40</text><text transform="translate(1675 724)rotate(-48)">17:25</text>
</g>

<!-- legend -->
<path d="M1409 756h18" stroke="#3fb3a3" stroke-width="2"/><circle cx="1418" cy="756" r="3.5" fill="#3fb3a3"/>
<text x="1431.7" y="759" font-size="9" fill="#555" textLength="73.3">Produce Requests</text>
<path d="M1514 756h18" stroke="#9531b5" stroke-width="2"/><circle cx="1523" cy="756" r="3.5" fill="#9531b5"/>
<text x="1536.5" y="759" font-size="9" fill="#555" textLength="63.5">Fetch Requests</text>
</svg>
<script>
document.querySelectorAll('path.sm').forEach(function(p){
  var d=p.getAttribute('d'),i=d.indexOf('h'),head=i<0?d:d.slice(0,i),tail=i<0?'':d.slice(i);
  var n=head.match(/-?[\d.]+/g).map(Number),P=[];
  for(var k=0;k<n.length;k+=2)P.push([n[k],n[k+1]]);
  var s='M'+P[0][0]+' '+P[0][1];
  for(k=0;k<P.length-1;k++){
    var a=P[k-1]||P[k],b=P[k],c=P[k+1],e=P[k+2]||c;
    s+='C'+(b[0]+(c[0]-a[0])/6)+' '+(b[1]+(c[1]-a[1])/6)+' '+(c[0]-(e[0]-b[0])/6)+' '+(c[1]-(e[1]-b[1])/6)+' '+c[0]+' '+c[1];
  }
  p.setAttribute('d',s+tail);
});
</script>
</body></html>
